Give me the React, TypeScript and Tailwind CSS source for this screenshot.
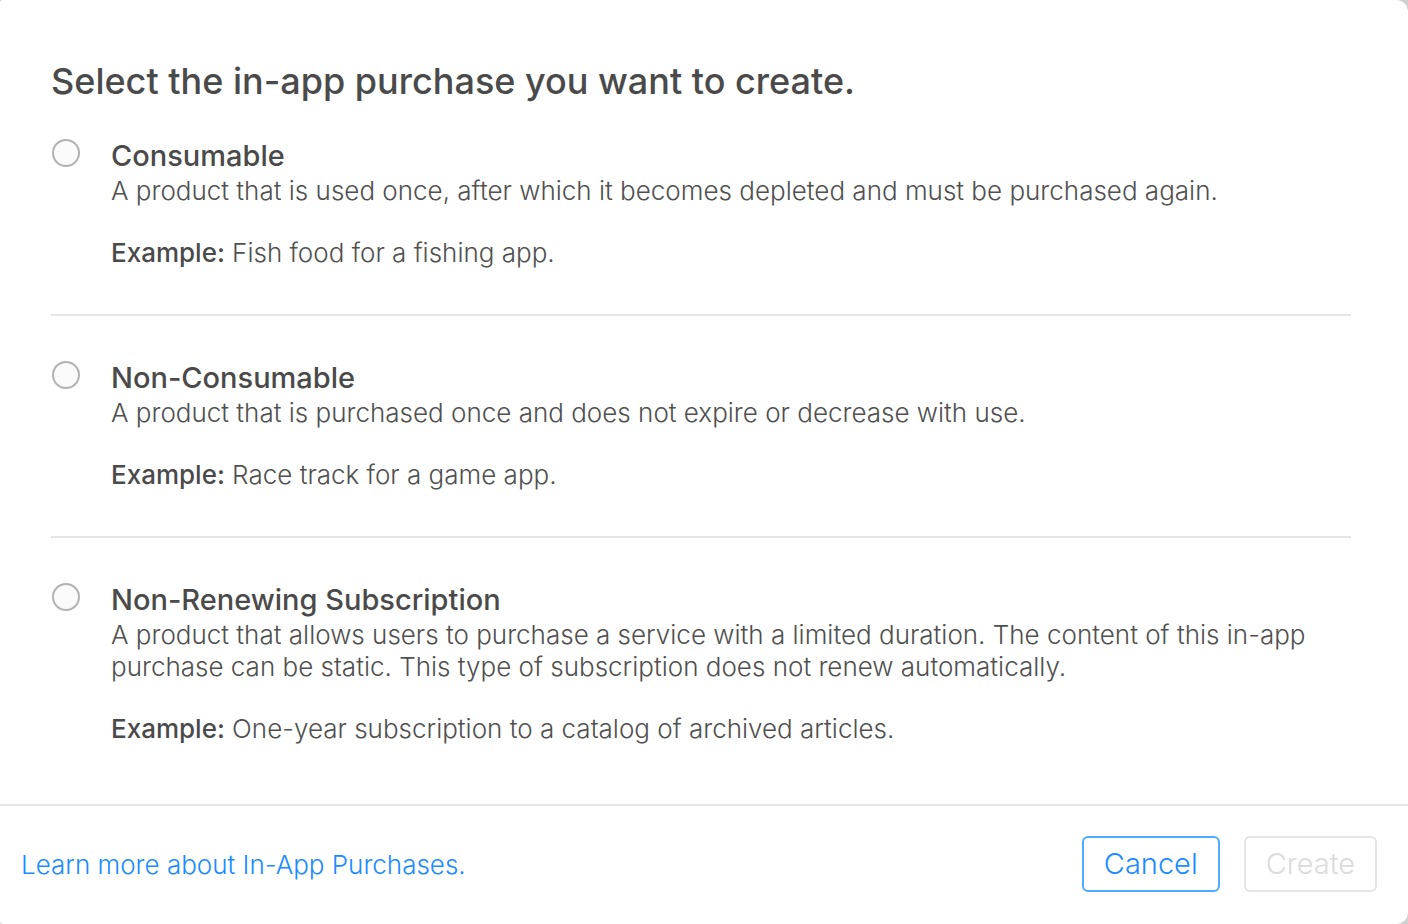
const options = [
  {
    id: "consumable",
    title: "Consumable",
    description:
      "A product that is used once, after which it becomes depleted and must be purchased again.",
    example: "Fish food for a fishing app.",
  },
  {
    id: "non-consumable",
    title: "Non-Consumable",
    description:
      "A product that is purchased once and does not expire or decrease with use.",
    example: "Race track for a game app.",
  },
  {
    id: "non-renewing",
    title: "Non-Renewing Subscription",
    description:
      "A product that allows users to purchase a service with a limited duration. The content of this in-app purchase can be static. This type of subscription does not renew automatically.",
    example: "One-year subscription to a catalog of archived articles.",
  },
];

type Option = (typeof options)[number];

function OptionRow({ option }: { option: Option }) {
  return (
    <div className="flex gap-[31px] border-b-2 border-[#e5e5e5] pt-11 pb-[45px] pl-px first:pt-0 last:border-b-0">
      <input
        type="radio"
        name="purchase-type"
        id={option.id}
        aria-describedby={`${option.id}-text`}
        className="mt-px size-7 shrink-0 appearance-none rounded-full border-2 border-[#b2b2b2] bg-[#fafafa] checked:border-8 checked:border-[#1a8cff]"
      />
      <div className="min-w-0 text-[26px] leading-8 font-light">
        <label htmlFor={option.id} className="block pb-px text-[29px] leading-9 font-medium">
          {option.title}
        </label>
        <p id={`${option.id}-text`} className="text-[#505050]">
          {option.description}
        </p>
        <p className="mt-[30px] text-[#505050]">
          <b className="font-medium text-[#4a4a4a]">Example:</b> {option.example}
        </p>
      </div>
    </div>
  );
}

export default function App() {
  return (
    <div className="min-h-screen bg-[#d0d0d0] font-['Inter',sans-serif] text-[#4a4a4a]">
      <main
        role="dialog"
        aria-labelledby="dialog-title"
        className="flex min-h-screen flex-col rounded-l-[3px] rounded-r-xl bg-white"
      >
        <form id="purchase-form" className="flex-1 pt-14 pr-[57px] pl-[51px]">
          <h1 id="dialog-title" className="text-[36px] leading-[50px] font-medium">
            Select the in-app purchase you want to create.
          </h1>
          <div className="mt-8">
            {options.map((option) => (
              <OptionRow key={option.id} option={option} />
            ))}
          </div>
        </form>
        <footer className="flex items-center justify-between border-t-2 border-[#e5e5e5] pt-[30px] pr-[31px] pb-8 pl-[21px]">
          <a href="#learn-more" className="pt-0.5 text-[26px] leading-8 font-light text-[#1a8cff]">
            Learn more about In-App Purchases.
          </a>
          <div className="flex gap-6 text-[29px] font-light">
            <button
              type="button"
              className="h-14 rounded-md border-2 border-[#4dacff] px-5 text-[#1a8cff]"
            >
              Cancel
            </button>
            <button
              type="submit"
              form="purchase-form"
              disabled
              className="h-14 rounded-md border-2 border-[#e5e5e5] px-5 text-[#dbdbdb]"
            >
              Create
            </button>
          </div>
        </footer>
      </main>
    </div>
  );
}
